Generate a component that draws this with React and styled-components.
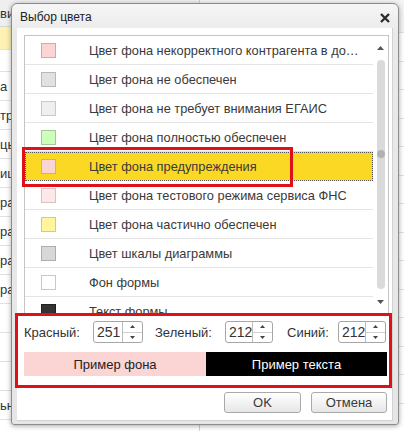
import React from "react";
import styled, { createGlobalStyle } from "styled-components";

const Global = createGlobalStyle`
  html, body { margin: 0; padding: 0; background: #fff; }
  body { font-family: "Liberation Sans", Arial, sans-serif; }
  * { box-sizing: border-box; }
`;

const Desktop = styled.div`
  position: relative;
  width: 404px;
  height: 431px;
  overflow: hidden;
  background: #fff;
  display: flex;
`;

const LeftPane = styled.div`
  width: 200px;
  display: flex;
  flex-direction: column;
  border-right: 1px solid #d0d0d0;
`;

const RightPane = styled.div`
  flex: 1;
  display: flex;
  flex-direction: column;
`;

const BackRow = styled.div`
  height: ${(p) => p.$h}px;
  flex: none;
  background: ${(p) => p.$bg || "#fff"};
  border-bottom: 1px solid ${(p) => p.$line || "#e2e2e2"};
  display: flex;
  align-items: center;
  font-size: 13px;
  color: #333;
  white-space: nowrap;
  overflow: hidden;
`;

const Dialog = styled.div`
  position: absolute;
  left: 11px;
  top: 3px;
  width: 388px;
  height: 422px;
  border: 1px solid #8c8c8c;
  border-radius: 6px 6px 3px 3px;
  background: linear-gradient(#f6f6f6, #e9e9e9 30px, #e6e6e6);
  box-shadow: 0 1px 5px rgba(0, 0, 0, 0.35);
  display: flex;
  flex-direction: column;
  padding: 0 5px 3px 5px;
`;

const TitleBar = styled.div`
  height: 24px;
  flex: none;
  display: flex;
  align-items: center;
  justify-content: space-between;
  padding: 1px 3px 0 3px;
`;

const Title = styled.span`
  font-size: 12px;
  color: #222;
`;

const Close = styled.svg`
  width: 10px;
  height: 10px;
  margin-top: 2px;
`;

const Body = styled.div`
  position: relative;
  flex: 1;
  background: #fff;
  border: 1px solid #d2d2d2;
  border-width: 0 1px 1px 0;
  display: flex;
  flex-direction: column;
  padding: 7px 3px 0 7px;
`;

const ListBox = styled.div`
  height: 280px;
  flex: none;
  border: 1px solid #c4c4c4;
  display: flex;
  overflow: hidden;
`;

const Rows = styled.div`
  flex: 1;
  min-width: 0;
  display: flex;
  flex-direction: column;
  overflow: hidden;
`;

const Row = styled.div`
  height: 29px;
  flex: none;
  display: flex;
  align-items: center;
  padding-left: 16px;
  border-bottom: 1px solid #e4e4e4;
  background: ${(p) => (p.$active ? "#fad824" : "#fff")};
  outline: ${(p) => (p.$active ? "1px dotted #555" : "none")};
  outline-offset: -1px;
`;

const Swatch = styled.span`
  width: 15px;
  height: 15px;
  flex: none;
  background: ${(p) => p.$c};
  border: 1px solid ${(p) => p.$b};
`;

const RowText = styled.span`
  flex: 1;
  min-width: 0;
  margin-left: 33px;
  padding-right: 12px;
  font-size: 12.8px;
  color: #3a3a3a;
  white-space: nowrap;
  overflow: hidden;
  text-overflow: ellipsis;
`;

const Scrollbar = styled.div`
  width: 15px;
  flex: none;
  display: flex;
  flex-direction: column;
  align-items: center;
`;

const ArrowBox = styled.div`
  height: ${(p) => (p.$h ? `${p.$h}px` : "auto")};
  display: flex;
  align-items: center;
  justify-content: center;
  flex: ${(p) => (p.$grow ? 1 : "none")};
`;

const Track = styled.div`
  position: relative;
  width: 8px;
  height: 229px;
  flex: none;
  border-radius: 4px;
  background: #dadada;
`;

const Thumb = styled.span`
  position: absolute;
  left: 0;
  top: 90px;
  width: 8px;
  height: 8px;
  border-radius: 50%;
  background: #b2b2b2;
`;

const Controls = styled.div`
  display: flex;
  align-items: center;
  margin-top: 6px;
  height: 22px;
`;

const Label = styled.span`
  width: ${(p) => p.$w}px;
  margin-left: ${(p) => p.$ml || 0}px;
  font-size: 13px;
  color: #333;
  flex: none;
`;

const Spinner = styled.div`
  width: ${(p) => p.$w}px;
  height: 22px;
  flex: none;
  display: flex;
  border: 1px solid #a6a6a6;
  border-radius: 3px;
  background: #fff;
`;

const SpinValue = styled.span`
  flex: 1;
  display: flex;
  align-items: center;
  padding-left: 3px;
  font-size: 14px;
  color: #333;
`;

const SpinButtons = styled.div`
  width: 20px;
  display: flex;
  flex-direction: column;
  border-left: 1px solid #bdbdbd;
`;

const SpinHalf = styled.div`
  flex: 1;
  display: flex;
  align-items: center;
  justify-content: center;
  border-bottom: ${(p) => (p.$top ? "1px solid #cfcfcf" : "none")};
`;

const Sample = styled.div`
  display: flex;
  height: 24px;
  margin-top: 9px;
  margin-right: 2px;
`;

const SamplePart = styled.div`
  width: ${(p) => (p.$w ? `${p.$w}px` : "auto")};
  flex: ${(p) => (p.$w ? "none" : 1)};
  background: ${(p) => p.$bg};
  color: ${(p) => p.$fg};
  font-size: 13px;
  display: flex;
  align-items: center;
  justify-content: center;
`;

const Buttons = styled.div`
  display: flex;
  justify-content: flex-end;
  gap: 10px;
  margin-top: 16px;
  margin-right: 2px;
`;

const Button = styled.button`
  width: ${(p) => p.$w}px;
  height: 21px;
  padding: 0;
  border: 1px solid #aaaaaa;
  border-radius: 3px;
  background: linear-gradient(#ffffff, #f1f1f1 60%, #e6e6e6);
  font-family: "Liberation Sans", Arial, sans-serif;
  font-size: 13px;
  color: #3a3a3a;
`;

const Mark = styled.div`
  position: absolute;
  left: ${(p) => p.$x}px;
  top: ${(p) => p.$y}px;
  width: ${(p) => p.$w}px;
  height: ${(p) => p.$h}px;
  border: 3px solid #e0101a;
  pointer-events: none;
`;

const Tri = ({ up, w = 7, h = 4, c = "#555" }) => (
  <svg width={w} height={h} viewBox={`0 0 ${w} ${h}`}>
    <polygon
      points={up ? `0,${h} ${w / 2},0 ${w},${h}` : `0,0 ${w},0 ${w / 2},${h}`}
      fill={c}
    />
  </svg>
);

const items = [
  ["Цвет фона некорректного контрагента в документе", "#fcd4d4", "#d2a9a9"],
  ["Цвет фона не обеспечен", "#e1e1e1", "#b9b9b9"],
  ["Цвет фона не требует внимания ЕГАИС", "#efefef", "#c9c9c9"],
  ["Цвет фона полностью обеспечен", "#ccffbb", "#a6c898"],
  ["Цвет фона предупреждения", "#fbd4d4", "#d4a7a7"],
  ["Цвет фона тестового режима сервиса ФНС", "#fde8e8", "#d9c2c2"],
  ["Цвет фона частично обеспечен", "#fff59d", "#d2c98a"],
  ["Цвет шкалы диаграммы", "#d8d8d8", "#adadad"],
  ["Фон формы", "#ffffff", "#c8c8c8"],
  ["Текст формы", "#333333", "#1f1f1f"],
];

const leftRows = [
  { h: 27, t: "ви", bg: "#efefef", line: "#d6d6d6" },
  { h: 23, t: "", bg: "#fdf2b4" },
  { h: 22, t: "" },
  { h: 29, t: "а" },
  { h: 29, t: "тр" },
  { h: 29, t: "ць" },
  { h: 29, t: "иц" },
  { h: 29, t: "ра" },
  { h: 29, t: "ра" },
  { h: 29, t: "ра" },
  { h: 29, t: "ра" },
  { h: 29, t: "" },
  { h: 29, t: "" },
  { h: 29, t: "" },
  { h: 29, t: "ьн" },
];

const Spin = ({ w, value }) => (
  <Spinner $w={w}>
    <SpinValue>{value}</SpinValue>
    <SpinButtons>
      <SpinHalf $top>
        <Tri up w={5} h={3} c="#444" />
      </SpinHalf>
      <SpinHalf>
        <Tri w={5} h={3} c="#444" />
      </SpinHalf>
    </SpinButtons>
  </Spinner>
);

export default function App() {
  return (
    <>
      <Global />
      <Desktop>
        <LeftPane>
          {leftRows.map((r, i) => (
            <BackRow key={i} $h={r.h} $bg={r.bg} $line={r.line}>
              {r.t}
            </BackRow>
          ))}
        </LeftPane>
        <RightPane>
          <BackRow $h={33} $bg="#f3f3f3" />
          {Array.from({ length: 14 }).map((_, i) => (
            <BackRow key={i} $h={28.5} />
          ))}
        </RightPane>

        <Dialog>
          <TitleBar>
            <Title>Выбор цвета</Title>
            <Close viewBox="0 0 10 10">
              <path d="M1 1 L9 9 M9 1 L1 9" stroke="#2b2b2b" strokeWidth="2.3" />
            </Close>
          </TitleBar>
          <Body>
            <ListBox>
              <Rows>
                {items.map(([t, c, b], i) => (
                  <Row key={t} $active={i === 4}>
                    <Swatch $c={c} $b={b} />
                    <RowText>{t}</RowText>
                  </Row>
                ))}
              </Rows>
              <Scrollbar>
                <ArrowBox $h={24}>
                  <Tri up w={7} h={4} />
                </ArrowBox>
                <Track>
                  <Thumb />
                </Track>
                <ArrowBox $grow>
                  <Tri w={7} h={4} />
                </ArrowBox>
              </Scrollbar>
            </ListBox>

            <Controls>
              <Label $w={69}>Красный:</Label>
              <Spin w={50} value="251" />
              <Label $w={70} $ml={12}>Зеленый:</Label>
              <Spin w={48} value="212" />
              <Label $w={51} $ml={14}>Синий:</Label>
              <Spin w={48} value="212" />
            </Controls>

            <Sample>
              <SamplePart $w={182} $bg="rgb(251,212,212)" $fg="#222">
                Пример фона
              </SamplePart>
              <SamplePart $bg="#000" $fg="#fff">
                Пример текста
              </SamplePart>
            </Sample>

            <Buttons>
              <Button $w={77}>OK</Button>
              <Button $w={76}>Отмена</Button>
            </Buttons>

            <Mark $x={5} $y={119} $w={271} $h={40} />
            <Mark $x={-2} $y={285} $w={377} $h={75} />
          </Body>
        </Dialog>
      </Desktop>
    </>
  );
}
